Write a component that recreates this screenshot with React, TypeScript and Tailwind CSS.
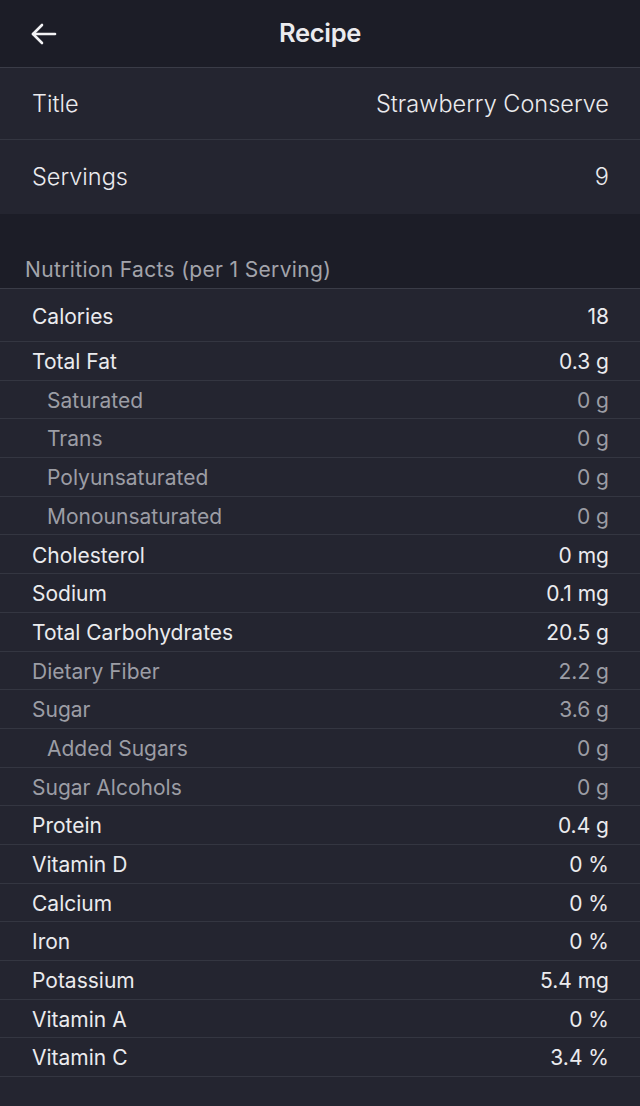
const rows: { label: string; value: string; dim?: boolean; indent?: boolean }[] = [
  { label: "Total Fat", value: "0.3 g" },
  { label: "Saturated", value: "0 g", dim: true, indent: true },
  { label: "Trans", value: "0 g", dim: true, indent: true },
  { label: "Polyunsaturated", value: "0 g", dim: true, indent: true },
  { label: "Monounsaturated", value: "0 g", dim: true, indent: true },
  { label: "Cholesterol", value: "0 mg" },
  { label: "Sodium", value: "0.1 mg" },
  { label: "Total Carbohydrates", value: "20.5 g" },
  { label: "Dietary Fiber", value: "2.2 g", dim: true },
  { label: "Sugar", value: "3.6 g", dim: true },
  { label: "Added Sugars", value: "0 g", dim: true, indent: true },
  { label: "Sugar Alcohols", value: "0 g", dim: true },
  { label: "Protein", value: "0.4 g" },
  { label: "Vitamin D", value: "0 %" },
  { label: "Calcium", value: "0 %" },
  { label: "Iron", value: "0 %" },
  { label: "Potassium", value: "5.4 mg" },
  { label: "Vitamin A", value: "0 %" },
  { label: "Vitamin C", value: "3.4 %" },
];

export default function App() {
  return (
    <div className="min-h-[1106px] bg-[#242530] text-[#ebebee] font-['Inter','Liberation_Sans',sans-serif]">
      {/* Nav bar */}
      <header className="relative h-[68px] bg-[#1c1d27] flex items-center justify-center border-b border-[#3a3c47]">
        <button className="absolute left-[30px] top-[22px] text-[#f2f2f4]">
          <svg width="28" height="24" viewBox="0 0 28 24" fill="none" stroke="currentColor" strokeWidth="2.6" strokeLinecap="round" strokeLinejoin="round">
            <path d="M25 12H3" />
            <path d="M12 3L3 12l9 9" />
          </svg>
        </button>
        <h1 className="text-[25.5px] font-semibold tracking-[-0.3px]">Recipe</h1>
      </header>

      {/* Title / servings */}
      <div className="h-[72px] pl-8 pr-[31px] flex items-center justify-between border-b border-[#343641] text-[23.5px] font-light">
        <span>Title</span>
        <span>Strawberry Conserve</span>
      </div>
      <div className="h-[74px] pl-8 pr-[31px] flex items-center justify-between text-[23.5px] font-light">
        <span>Servings</span>
        <span>9</span>
      </div>

      {/* Section header */}
      <div className="h-[75px] bg-[#1c1d27] px-[25px] flex items-end pb-[3px] border-b border-[#3a3c47]">
        <span className="text-[21px] tracking-[0.35px] text-[#a3a4ab]">Nutrition Facts (per 1 Serving)</span>
      </div>

      <div className="h-[53px] pl-8 pr-[31px] flex items-center justify-between border-b border-[#343641] text-[21px] pt-[4px]">
        <span>Calories</span>
        <span>18</span>
      </div>

      {rows.map((r) => (
        <div
          key={r.label}
          className={`h-[38.7px] pr-[31px] flex items-center justify-between border-b border-[#343641] text-[21px] pt-[2px] ${
            r.indent ? "pl-[47px]" : "pl-8"
          } ${r.dim ? "text-[#9c9da5]" : ""}`}
        >
          <span>{r.label}</span>
          <span>{r.value}</span>
        </div>
      ))}
    </div>
  );
}
